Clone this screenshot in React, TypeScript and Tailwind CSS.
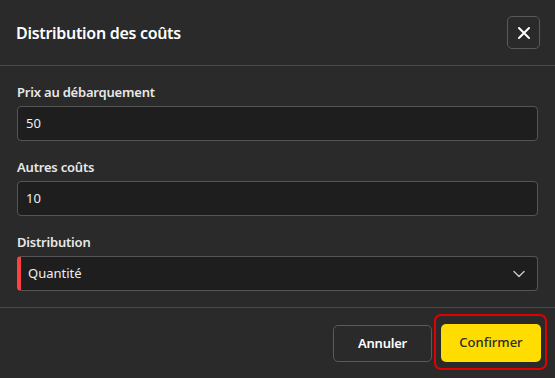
import React from "react";

function ChevronDown() {
  return (
    <svg width="14" height="14" viewBox="0 0 14 14" fill="none">
      <path d="M2 4.5L7 9.5L12 4.5" stroke="#c8c8c8" strokeWidth="1.4" strokeLinecap="round" strokeLinejoin="round" />
    </svg>
  );
}

function CloseIcon() {
  return (
    <svg width="14" height="14" viewBox="0 0 14 14" fill="none">
      <path d="M2 2L12 12M12 2L2 12" stroke="#ffffff" strokeWidth="2" strokeLinecap="round" />
    </svg>
  );
}

export default function App() {
  return (
    <div
      className="w-[555px] h-[378px] bg-[#2a2a2a] text-white flex flex-col overflow-hidden"
      style={{ fontFamily: '"Noto Sans", "Open Sans", sans-serif' }}
    >
      <div className="h-[66px] flex items-center justify-between pl-[16px] pr-[15px] border-b border-[#4a4a4a] shrink-0">
        <h1 className="text-[16px] font-semibold tracking-[-0.3px]">Distribution des coûts</h1>
        <button className="w-[33px] h-[33px] flex items-center justify-center rounded-[5px] border border-[#5a5a5a]">
          <CloseIcon />
        </button>
      </div>
      <div className="flex flex-col px-[17px] pt-[17px] pb-[16px] border-b border-[#4a4a4a]">
        <label className="text-[13px] font-semibold text-[#e8e8e8] leading-[18px] mb-[5px] tracking-[-0.2px]">Prix au débarquement</label>
        <div className="h-[35px] rounded-[4px] border border-[#555] bg-[#1e1e1e] flex items-center px-[8px] text-[13px] text-[#eee]">50</div>
        <label className="text-[13px] font-semibold text-[#e8e8e8] leading-[18px] mt-[17px] mb-[5px] tracking-[-0.2px]">Autres coûts</label>
        <div className="h-[35px] rounded-[4px] border border-[#555] bg-[#1e1e1e] flex items-center px-[8px] text-[13px] text-[#eee]">10</div>
        <label className="text-[13px] font-semibold text-[#e8e8e8] leading-[18px] mt-[17px] mb-[5px] tracking-[-0.2px]">Distribution</label>
        <div className="h-[35px] rounded-[4px] border border-[#555] border-l-[4px] border-l-[#ff4040] bg-[#1e1e1e] flex items-center justify-between pl-[7px] pr-[11px] text-[13px] text-[#eee]">
          <span>Quantité</span>
          <ChevronDown />
        </div>
      </div>
      <div className="flex-1 flex items-start justify-end gap-[2px] pr-[8px] pt-[6px]">
        <button className="mt-[11px] w-[99px] h-[37px] rounded-[5px] border border-[#5a5a5a] text-[13px] font-semibold tracking-[-0.2px]">Annuler</button>
        <div className="pl-[5px] pr-[4px] pt-[8px] pb-[6px] rounded-[7px] border-2 border-[#e00000]">
          <button className="w-[100px] h-[38px] rounded-[5px] bg-[#ffdd00] text-[#2a2a2a] text-[13px] font-medium">Confirmer</button>
        </div>
      </div>
    </div>
  );
}
